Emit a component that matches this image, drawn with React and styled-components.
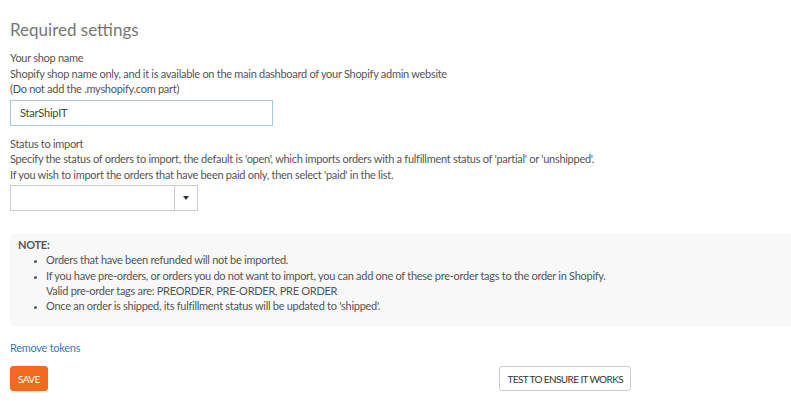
import React, { useState } from "react";
import styled, { createGlobalStyle } from "styled-components";

const GlobalStyle = createGlobalStyle`
  body {
    margin: 0;
    background: #fff;
    font-family: Lato, "Open Sans", sans-serif;
  }
`;

function App() {
  const [shop, setShop] = useState("StarShipIT");
  const [status, setStatus] = useState("");

  return (
    <>
      <GlobalStyle />
      <Page>
        <Title>Required settings</Title>

        <Field>
          <Help>
            Your shop name
            <br />
            Shopify shop name only, and it is available on the main dashboard of your Shopify admin website
            <br />
            (Do not add the .myshopify.com part)
          </Help>
          <TextInput value={shop} onChange={(e) => setShop(e.target.value)} />
        </Field>

        <Field>
          <Help>
            Status to import
            <br />
            Specify the status of orders to import, the default is 'open', which imports orders with a fulfillment status of 'partial' or 'unshipped'.
            <br />
            If you wish to import the orders that have been paid only, then select 'paid' in the list.
          </Help>
          <SelectBox>
            <SelectValue>{status}</SelectValue>
            <SelectArrow>
              <svg width="6" height="4" viewBox="0 0 6 4">
                <path d="M0 0H6L3 4Z" fill="#333" />
              </svg>
            </SelectArrow>
          </SelectBox>
        </Field>

        <Note>
          <NoteTitle>NOTE:</NoteTitle>
          <NoteList>
            <li>Orders that have been refunded will not be imported.</li>
            <li>
              If you have pre-orders, or orders you do not want to import, you can add one of these pre-order tags to the order in Shopify.
              <br />
              Valid pre-order tags are: PREORDER, PRE-ORDER, PRE ORDER
            </li>
            <li>Once an order is shipped, its fulfillment status will be updated to 'shipped'.</li>
          </NoteList>
        </Note>

        <Link href="#" onClick={(e) => e.preventDefault()}>
          Remove tokens
        </Link>

        <Actions>
          <Button primary>SAVE</Button>
          <Button>TEST TO ENSURE IT WORKS</Button>
        </Actions>
      </Page>
    </>
  );
}

const Page = styled.div`
  padding: 20px 0 0 10px;
  color: #666;
  letter-spacing: -0.28px;
`;

const Title = styled.h2`
  margin: 0 0 10px;
  font-size: 17px;
  font-weight: 400;
  color: #777;
  line-height: 20px;
  letter-spacing: 0;
`;

const Field = styled.div`
  margin-bottom: 10px;
`;

const Help = styled.div`
  font-size: 11px;
  line-height: 15.5px;
  color: #555;
  margin-bottom: 3px;
`;

const TextInput = styled.input`
  box-sizing: border-box;
  display: block;
  width: 263px;
  height: 26px;
  padding: 0 9px;
  border: 1px solid #a9c6e2;
  border-radius: 0;
  font-family: inherit;
  font-size: 11px;
  letter-spacing: -0.2px;
  color: #444;
  outline: none;
`;

const SelectBox = styled.div`
  box-sizing: border-box;
  width: 188px;
  height: 26px;
  border: 1px solid #ccc;
  display: flex;
`;

const SelectValue = styled.div`
  flex: 1;
  font-size: 11px;
  padding: 0 8px;
  line-height: 24px;
`;

const SelectArrow = styled.div`
  width: 22px;
  border-left: 1px solid #ccc;
  display: flex;
  align-items: center;
  justify-content: center;
`;

const Note = styled.div`
  margin-top: 23px;
  background: #f8f8f8;
  border-radius: 3px 0 0 3px;
  padding: 3px 8px 13px;
  font-size: 11px;
  line-height: 15.25px;
  color: #555;
`;

const NoteTitle = styled.div`
  font-weight: 700;
  color: #555;
  line-height: 15.25px;
`;

const NoteList = styled.ul`
  margin: 0;
  padding-left: 28px;
  li {
    line-height: 15.25px;
  }
  li::marker {
    font-size: 8px;
  }
`;

const Link = styled.a`
  display: inline-block;
  margin-top: 15px;
  font-size: 11px;
  color: #3a7bc0;
  text-decoration: none;
`;

const Actions = styled.div`
  display: flex;
  justify-content: space-between;
  width: 621px;
  margin-top: 11px;
`;

const Button = styled.button`
  box-sizing: border-box;
  height: 25px;
  padding: 0 ${(p) => (p.primary ? "7px" : "7px")};
  border-radius: 3px;
  border: 1px solid ${(p) => (p.primary ? "#f26b1d" : "#ccc")};
  background: ${(p) => (p.primary ? "#f26b1d" : "#fff")};
  color: ${(p) => (p.primary ? "#fff" : "#333")};
  font-family: inherit;
  font-size: 10px;
  letter-spacing: -0.6px;
  cursor: pointer;
`;

export default App;
